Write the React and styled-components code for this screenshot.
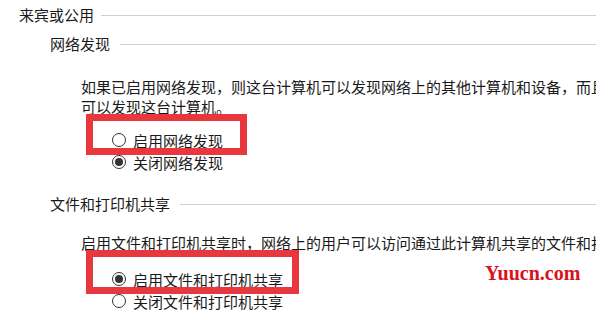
import React from "react";
import styled, { createGlobalStyle } from "styled-components";

const GlobalStyle = createGlobalStyle`
  html, body {
    margin: 0;
    padding: 0;
    background: #fff;
    overflow: hidden;
  }
  body {
    font-family: "Noto Sans CJK SC", "Noto Sans", sans-serif;
    color: #1a1a1a;
    font-size: 15px;
  }
`;

const Page = styled.div`
  width: 596px;
  height: 328px;
  padding: 5px 0 0 19px;
  box-sizing: border-box;
  position: relative;
  overflow: hidden;
`;

const HeadRow = styled.div`
  display: flex;
  align-items: center;
  height: 20px;
  line-height: 20px;
  margin-top: ${(p) => p.top || 0}px;
  padding-left: ${(p) => p.indent || 0}px;
`;

const HeadText = styled.span`
  white-space: nowrap;
  margin-right: ${(p) => p.gap || 8}px;
`;

const Rule = styled.div`
  flex: 1;
  height: 1px;
  background: #cfcfcf;
`;

const Desc = styled.p`
  margin: ${(p) => p.top}px 0 0;
  padding-left: 62px;
  line-height: 20px;
  white-space: nowrap;
`;

const Options = styled.div`
  display: flex;
  flex-direction: column;
  margin-top: ${(p) => p.top}px;
  padding-left: 93px;
`;

const Option = styled.label`
  position: relative;
  display: flex;
  align-items: center;
  height: 22px;
  gap: 7px;
  white-space: nowrap;
`;

const Radio = styled.span`
  width: 14px;
  height: 14px;
  box-sizing: border-box;
  border: 1px solid #333;
  border-radius: 50%;
  display: flex;
  align-items: center;
  justify-content: center;
  background: #fff;
  &::after {
    content: "";
    width: 8px;
    height: 8px;
    border-radius: 50%;
    background: ${(p) => (p.checked ? "#333" : "transparent")};
  }
`;

const Highlight = styled.div`
  position: absolute;
  left: -26px;
  top: ${(p) => p.top}px;
  width: ${(p) => p.w}px;
  height: ${(p) => p.h}px;
  border: 7px solid #e8383e;
  box-sizing: border-box;
  pointer-events: none;
  z-index: 2;
`;

const Watermark = styled.div`
  position: absolute;
  left: 485px;
  top: 260px;
  font-family: "Liberation Serif", "DejaVu Serif", serif;
  font-weight: bold;
  font-size: 20px;
  line-height: 26px;
  color: #d9121b;
`;

const App = () => {
  return (
    <Page>
      <GlobalStyle />
      <HeadRow>
        <HeadText gap={7}>来宾或公用</HeadText>
        <Rule />
      </HeadRow>

      <HeadRow top={9} indent={31}>
        <HeadText gap={10}>网络发现</HeadText>
        <Rule />
      </HeadRow>
      <Desc top={23}>
        如果已启用网络发现，则这台计算机可以发现网络上的其他计算机和设备，而且其他网络计算机也
        <br />
        可以发现这台计算机。
      </Desc>
      <Options top={12}>
        <Option>
          <Highlight top={-15} w={161} h={41} />
          <Radio />
          启用网络发现
        </Option>
        <Option>
          <Radio checked />
          关闭网络发现
        </Option>
      </Options>

      <HeadRow top={21} indent={31}>
        <HeadText gap={10}>文件和打印机共享</HeadText>
        <Rule />
      </HeadRow>
      <Desc top={19}>
        启用文件和打印机共享时，网络上的用户可以访问通过此计算机共享的文件和打印机。
      </Desc>
      <Options top={15}>
        <Option>
          <Highlight top={-18} w={213} h={44} />
          <Radio checked />
          启用文件和打印机共享
        </Option>
        <Option>
          <Radio />
          关闭文件和打印机共享
        </Option>
      </Options>

      <Watermark>Yuucn.com</Watermark>
    </Page>
  );
};

export default App;
